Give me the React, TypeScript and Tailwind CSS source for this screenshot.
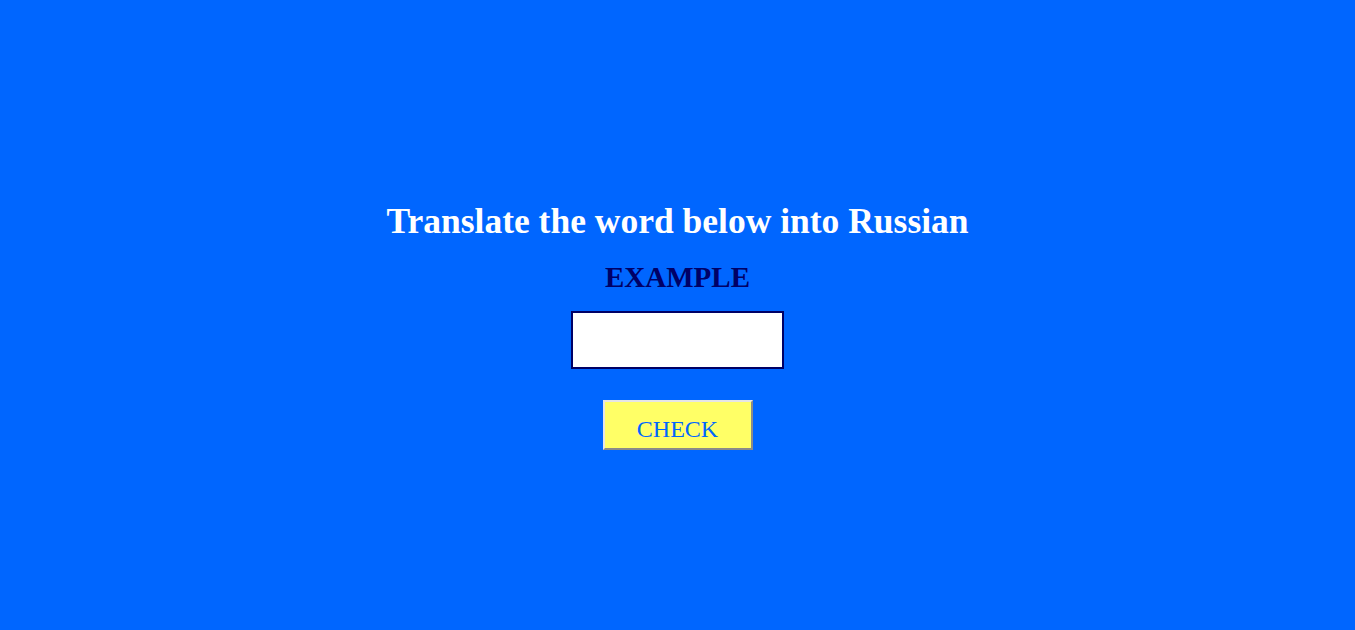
export default function App() {
  return (
    <div className="w-[1355px] h-[630px] bg-[#0066ff] flex flex-col items-center pt-[199px] font-['Liberation_Serif',serif]">
      <h1 className="text-white font-bold text-[35.5px] leading-[44px]">Translate the word below into Russian</h1>
      <div className="mt-[16px] text-[#000066] font-bold text-[29px] leading-[36px] uppercase">Example</div>
      <input
        type="text"
        className="mt-[16px] w-[213px] h-[58px] bg-white border-2 border-[#000066] outline-none"
      />
      <button className="mt-[31px] w-[150px] h-[50px] bg-[#ffff66] border-2 border-t-[#e5e5e5] border-l-[#e5e5e5] border-b-[#8a8a8a] border-r-[#8a8a8a] text-[#0066ff] text-[24px] uppercase pt-[8px] leading-none">
        Check
      </button>
    </div>
  );
}
